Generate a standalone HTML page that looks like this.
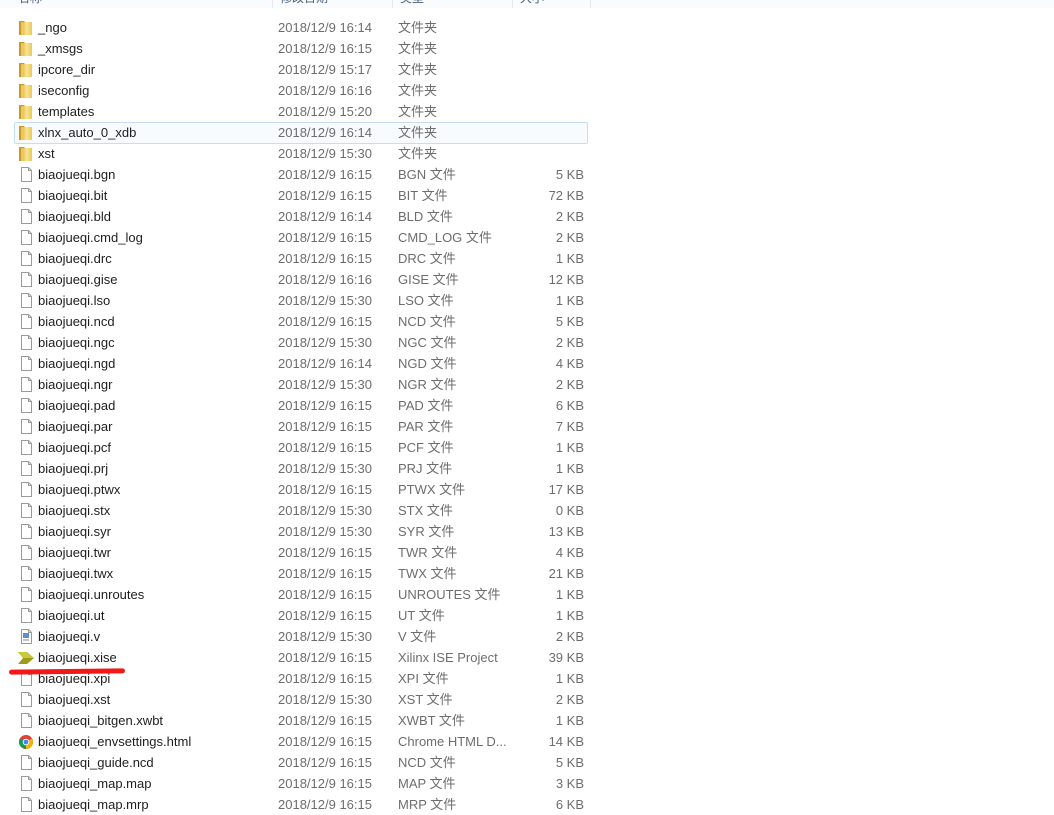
<!DOCTYPE html>
<html><head><meta charset="utf-8"><style>
body{margin:0;width:1054px;height:814px;background:#fff;overflow:hidden;position:relative;font-family:"Liberation Sans","Microsoft YaHei","Noto Sans CJK SC",sans-serif;font-size:13px;}
.hdr{position:absolute;left:0;top:0;width:1054px;height:8px;background:#fafbfd;overflow:hidden;}
.hdr span{position:absolute;top:-11px;color:#4c607a;font-size:12px;}
.dv{position:absolute;top:0;width:1px;height:8px;background:#e3e8f0;}
.r{position:absolute;left:0;width:600px;height:21px;line-height:21px;}
.r .n{position:absolute;left:38px;color:#1e1e1e;}
.r .d{position:absolute;left:278px;color:#6d6d6d;}
.r .t{position:absolute;left:398px;color:#6d6d6d;}
.r .s{position:absolute;right:16px;color:#6d6d6d;}
.r svg{position:absolute;left:18px;top:2px;}
.sel{position:absolute;left:14px;top:122px;width:572px;height:20px;border:1px solid #c7ddf3;border-radius:2px;background:#f8fbfe;}
.red{position:absolute;left:9px;top:669px;width:116px;height:5px;background:#f31818;border-radius:3px;transform:rotate(-0.6deg);}
</style></head><body>
<div class="hdr"><span style="left:18px">名称</span><span style="left:280px">修改日期</span><span style="left:400px">类型</span><span style="left:520px">大小</span>
<div class="dv" style="left:272px"></div><div class="dv" style="left:392px"></div><div class="dv" style="left:512px"></div><div class="dv" style="left:590px"></div></div>
<div class="sel"></div>
<svg width="0" height="0" style="position:absolute"><defs>
<linearGradient id="fg" x1="0" x2="1"><stop offset="0" stop-color="#dcae30"/><stop offset=".5" stop-color="#f8e490"/><stop offset="1" stop-color="#eac85e"/></linearGradient>
<symbol id="fo" viewBox="0 0 16 17"><path d="M1 2h5l1 1h0v13H1z" fill="#c99a27"/><path d="M3 3h11v13H3z" fill="url(#fg)"/><path d="M3 3l3 2v11H3z" fill="#ecc862"/></symbol>
<symbol id="fi" viewBox="0 0 16 17"><path d="M3.5 1.5h7l3 3v11h-10z" fill="#fff" stroke="#9a9a9a"/><path d="M10.5 1.5v3h3" fill="none" stroke="#9a9a9a"/></symbol>
</defs></svg>
<div class="r" style="top:17px"><svg width="16" height="17"><use href="#fo"/></svg><span class="n">_ngo</span><span class="d">2018/12/9 16:14</span><span class="t">文件夹</span></div>
<div class="r" style="top:38px"><svg width="16" height="17"><use href="#fo"/></svg><span class="n">_xmsgs</span><span class="d">2018/12/9 16:15</span><span class="t">文件夹</span></div>
<div class="r" style="top:59px"><svg width="16" height="17"><use href="#fo"/></svg><span class="n">ipcore_dir</span><span class="d">2018/12/9 15:17</span><span class="t">文件夹</span></div>
<div class="r" style="top:80px"><svg width="16" height="17"><use href="#fo"/></svg><span class="n">iseconfig</span><span class="d">2018/12/9 16:16</span><span class="t">文件夹</span></div>
<div class="r" style="top:101px"><svg width="16" height="17"><use href="#fo"/></svg><span class="n">templates</span><span class="d">2018/12/9 15:20</span><span class="t">文件夹</span></div>
<div class="r" style="top:122px"><svg width="16" height="17"><use href="#fo"/></svg><span class="n">xlnx_auto_0_xdb</span><span class="d">2018/12/9 16:14</span><span class="t">文件夹</span></div>
<div class="r" style="top:143px"><svg width="16" height="17"><use href="#fo"/></svg><span class="n">xst</span><span class="d">2018/12/9 15:30</span><span class="t">文件夹</span></div>
<div class="r" style="top:164px"><svg width="16" height="17"><use href="#fi"/></svg><span class="n">biaojueqi.bgn</span><span class="d">2018/12/9 16:15</span><span class="t">BGN 文件</span><span class="s">5 KB</span></div>
<div class="r" style="top:185px"><svg width="16" height="17"><use href="#fi"/></svg><span class="n">biaojueqi.bit</span><span class="d">2018/12/9 16:15</span><span class="t">BIT 文件</span><span class="s">72 KB</span></div>
<div class="r" style="top:206px"><svg width="16" height="17"><use href="#fi"/></svg><span class="n">biaojueqi.bld</span><span class="d">2018/12/9 16:14</span><span class="t">BLD 文件</span><span class="s">2 KB</span></div>
<div class="r" style="top:227px"><svg width="16" height="17"><use href="#fi"/></svg><span class="n">biaojueqi.cmd_log</span><span class="d">2018/12/9 16:15</span><span class="t">CMD_LOG 文件</span><span class="s">2 KB</span></div>
<div class="r" style="top:248px"><svg width="16" height="17"><use href="#fi"/></svg><span class="n">biaojueqi.drc</span><span class="d">2018/12/9 16:15</span><span class="t">DRC 文件</span><span class="s">1 KB</span></div>
<div class="r" style="top:269px"><svg width="16" height="17"><use href="#fi"/></svg><span class="n">biaojueqi.gise</span><span class="d">2018/12/9 16:16</span><span class="t">GISE 文件</span><span class="s">12 KB</span></div>
<div class="r" style="top:290px"><svg width="16" height="17"><use href="#fi"/></svg><span class="n">biaojueqi.lso</span><span class="d">2018/12/9 15:30</span><span class="t">LSO 文件</span><span class="s">1 KB</span></div>
<div class="r" style="top:311px"><svg width="16" height="17"><use href="#fi"/></svg><span class="n">biaojueqi.ncd</span><span class="d">2018/12/9 16:15</span><span class="t">NCD 文件</span><span class="s">5 KB</span></div>
<div class="r" style="top:332px"><svg width="16" height="17"><use href="#fi"/></svg><span class="n">biaojueqi.ngc</span><span class="d">2018/12/9 15:30</span><span class="t">NGC 文件</span><span class="s">2 KB</span></div>
<div class="r" style="top:353px"><svg width="16" height="17"><use href="#fi"/></svg><span class="n">biaojueqi.ngd</span><span class="d">2018/12/9 16:14</span><span class="t">NGD 文件</span><span class="s">4 KB</span></div>
<div class="r" style="top:374px"><svg width="16" height="17"><use href="#fi"/></svg><span class="n">biaojueqi.ngr</span><span class="d">2018/12/9 15:30</span><span class="t">NGR 文件</span><span class="s">2 KB</span></div>
<div class="r" style="top:395px"><svg width="16" height="17"><use href="#fi"/></svg><span class="n">biaojueqi.pad</span><span class="d">2018/12/9 16:15</span><span class="t">PAD 文件</span><span class="s">6 KB</span></div>
<div class="r" style="top:416px"><svg width="16" height="17"><use href="#fi"/></svg><span class="n">biaojueqi.par</span><span class="d">2018/12/9 16:15</span><span class="t">PAR 文件</span><span class="s">7 KB</span></div>
<div class="r" style="top:437px"><svg width="16" height="17"><use href="#fi"/></svg><span class="n">biaojueqi.pcf</span><span class="d">2018/12/9 16:15</span><span class="t">PCF 文件</span><span class="s">1 KB</span></div>
<div class="r" style="top:458px"><svg width="16" height="17"><use href="#fi"/></svg><span class="n">biaojueqi.prj</span><span class="d">2018/12/9 15:30</span><span class="t">PRJ 文件</span><span class="s">1 KB</span></div>
<div class="r" style="top:479px"><svg width="16" height="17"><use href="#fi"/></svg><span class="n">biaojueqi.ptwx</span><span class="d">2018/12/9 16:15</span><span class="t">PTWX 文件</span><span class="s">17 KB</span></div>
<div class="r" style="top:500px"><svg width="16" height="17"><use href="#fi"/></svg><span class="n">biaojueqi.stx</span><span class="d">2018/12/9 15:30</span><span class="t">STX 文件</span><span class="s">0 KB</span></div>
<div class="r" style="top:521px"><svg width="16" height="17"><use href="#fi"/></svg><span class="n">biaojueqi.syr</span><span class="d">2018/12/9 15:30</span><span class="t">SYR 文件</span><span class="s">13 KB</span></div>
<div class="r" style="top:542px"><svg width="16" height="17"><use href="#fi"/></svg><span class="n">biaojueqi.twr</span><span class="d">2018/12/9 16:15</span><span class="t">TWR 文件</span><span class="s">4 KB</span></div>
<div class="r" style="top:563px"><svg width="16" height="17"><use href="#fi"/></svg><span class="n">biaojueqi.twx</span><span class="d">2018/12/9 16:15</span><span class="t">TWX 文件</span><span class="s">21 KB</span></div>
<div class="r" style="top:584px"><svg width="16" height="17"><use href="#fi"/></svg><span class="n">biaojueqi.unroutes</span><span class="d">2018/12/9 16:15</span><span class="t">UNROUTES 文件</span><span class="s">1 KB</span></div>
<div class="r" style="top:605px"><svg width="16" height="17"><use href="#fi"/></svg><span class="n">biaojueqi.ut</span><span class="d">2018/12/9 16:15</span><span class="t">UT 文件</span><span class="s">1 KB</span></div>
<div class="r" style="top:626px"><svg width="16" height="17"><use href="#fi"/><rect x="5" y="5" width="6" height="5" fill="#5b8fd0"/><path d="M5 12h6" stroke="#888"/></svg><span class="n">biaojueqi.v</span><span class="d">2018/12/9 15:30</span><span class="t">V 文件</span><span class="s">2 KB</span></div>
<div class="r" style="top:647px"><svg width="16" height="17"><path d="M0 3h9l7 6-7 6H0l5-6z" fill="#9c9c1a"/><path d="M0 3h9l7 6H5z" fill="#c8c83a"/></svg><span class="n">biaojueqi.xise</span><span class="d">2018/12/9 16:15</span><span class="t">Xilinx ISE Project</span><span class="s">39 KB</span></div>
<div class="r" style="top:668px"><svg width="16" height="17"><use href="#fi"/></svg><span class="n">biaojueqi.xpi</span><span class="d">2018/12/9 16:15</span><span class="t">XPI 文件</span><span class="s">1 KB</span></div>
<div class="r" style="top:689px"><svg width="16" height="17"><use href="#fi"/></svg><span class="n">biaojueqi.xst</span><span class="d">2018/12/9 15:30</span><span class="t">XST 文件</span><span class="s">2 KB</span></div>
<div class="r" style="top:710px"><svg width="16" height="17"><use href="#fi"/></svg><span class="n">biaojueqi_bitgen.xwbt</span><span class="d">2018/12/9 16:15</span><span class="t">XWBT 文件</span><span class="s">1 KB</span></div>
<div class="r" style="top:731px"><svg width="16" height="17" viewBox="0 0 16 17"><circle cx="8" cy="9" r="7" fill="#db4437"/><path d="M8 9L2 5.5A7 7 0 0 0 8 16z" fill="#0f9d58"/><path d="M8 9L14 5.5A7 7 0 0 1 8 16z" fill="#f4b400"/><circle cx="8" cy="9" r="3.3" fill="#fff"/><circle cx="8" cy="9" r="2.4" fill="#4285f4"/></svg><span class="n">biaojueqi_envsettings.html</span><span class="d">2018/12/9 16:15</span><span class="t">Chrome HTML D...</span><span class="s">14 KB</span></div>
<div class="r" style="top:752px"><svg width="16" height="17"><use href="#fi"/></svg><span class="n">biaojueqi_guide.ncd</span><span class="d">2018/12/9 16:15</span><span class="t">NCD 文件</span><span class="s">5 KB</span></div>
<div class="r" style="top:773px"><svg width="16" height="17"><use href="#fi"/></svg><span class="n">biaojueqi_map.map</span><span class="d">2018/12/9 16:15</span><span class="t">MAP 文件</span><span class="s">3 KB</span></div>
<div class="r" style="top:794px"><svg width="16" height="17"><use href="#fi"/></svg><span class="n">biaojueqi_map.mrp</span><span class="d">2018/12/9 16:15</span><span class="t">MRP 文件</span><span class="s">6 KB</span></div>
<div class="red"></div>
</body></html>
